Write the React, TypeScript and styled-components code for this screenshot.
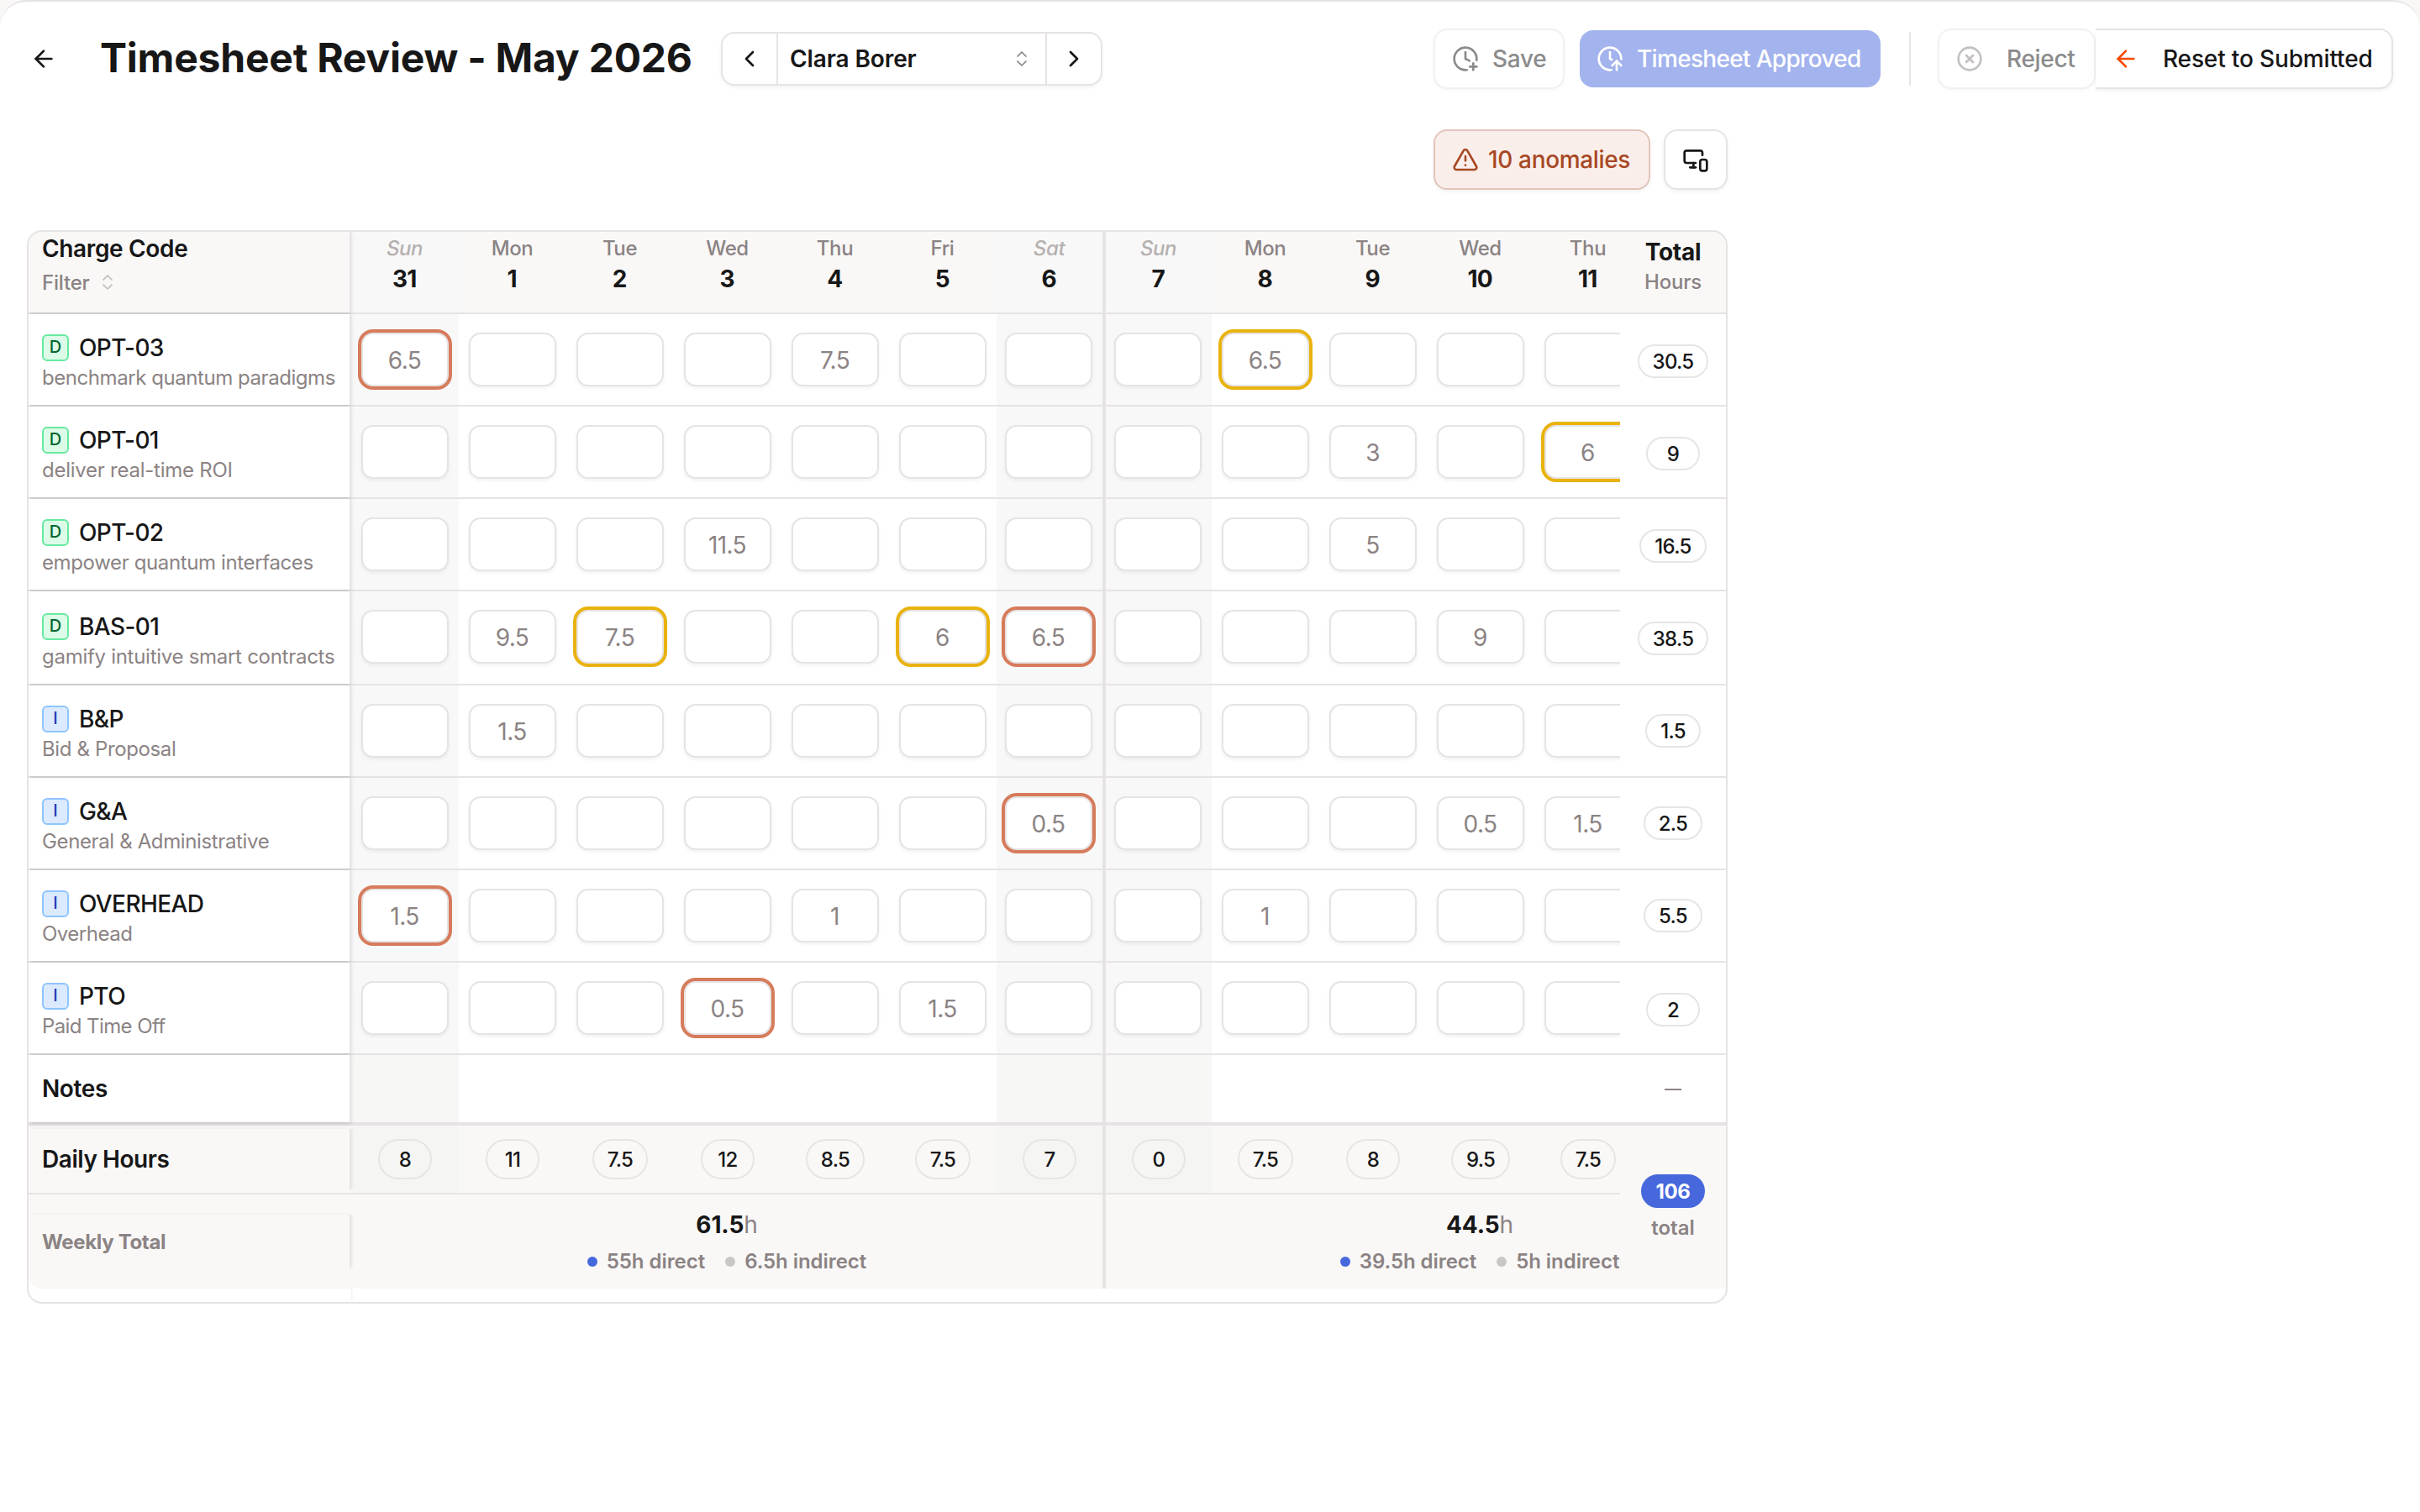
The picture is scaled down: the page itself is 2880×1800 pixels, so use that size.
import React from "react";
import styled, { createGlobalStyle, css } from "styled-components";
import {
  ArrowLeft,
  ChevronLeft,
  ChevronRight,
  ChevronsUpDown,
  CircleX,
  ClockArrowUp,
  ClockPlus,
  MonitorSmartphone,
  TriangleAlert,
} from "lucide-react";

const color = {
  ink: "#171717",
  muted: "#8b8384",
  faint: "#b5b0b0",
  line: "#e7e3e4",
  stone: "#f9f8f7",
  blue: "#4668dc",
};

const GlobalStyle = createGlobalStyle`
  *, *::before, *::after { box-sizing: border-box; }
  body {
    margin: 0;
    background: ${color.stone};
    color: ${color.ink};
    font-family: Inter, "Liberation Sans", sans-serif;
    font-size: 28px;
  }
  button { font: inherit; color: inherit; margin: 0; }
`;

const Page = styled.main`
  height: 1800px;
  padding: 0 32px;
  overflow: hidden;
  background: #fff;
  border-top: 2px solid ${color.line};
  border-radius: 32px 32px 0 0;
`;

const Header = styled.header`
  display: flex;
  align-items: center;
  height: 136px;
`;

const BackButton = styled.button`
  display: flex;
  padding: 0;
  border: 0;
  background: none;
  margin: 0 51px 0 4px;
`;

const Title = styled.h1`
  margin: 0 34px 3px 0;
  width: 705px;
  font-size: 48px;
  font-weight: 700;
  line-height: 60px;
  letter-spacing: -0.22px;
  white-space: nowrap;
`;

const Switcher = styled.div`
  display: flex;
  width: 454px;
  height: 64px;
  border: 2px solid ${color.line};
  border-radius: 16px;
  box-shadow: 0 2px 4px rgba(0, 0, 0, 0.05);
`;

const StepButton = styled.button`
  display: flex;
  align-items: center;
  justify-content: center;
  width: 64px;
  padding: 0;
  border: 0;
  background: none;
`;

const PersonSelect = styled.button`
  display: flex;
  align-items: center;
  justify-content: space-between;
  flex: 1;
  padding: 0 15px 0 14px;
  border: solid ${color.line};
  border-width: 0 2px;
  background: none;
  font-weight: 600;
  letter-spacing: -0.1px;

  svg { color: #858585; margin-right: 1px; }
`;

const Actions = styled.div`
  display: flex;
  align-items: center;
  margin-left: auto;
`;

const ActionButton = styled.button<{ $w: number; $gap?: number; $dim?: boolean; $joined?: boolean; $track?: number }>`
  display: flex;
  align-items: center;
  gap: ${(p) => p.$gap ?? 16}px;
  width: ${(p) => p.$w}px;
  height: 72px;
  padding: 0 0 0 20px;
  border: 2px solid ${(p) => (p.$dim ? "#f2f0f0" : color.line)};
  border-radius: 16px;
  background: #fff;
  color: ${(p) => (p.$dim ? "#8b8b8b" : color.ink)};
  font-weight: 550;
  letter-spacing: ${(p) => p.$track ?? -0.35}px;
  white-space: nowrap;
  box-shadow: 0 2px 4px rgba(0, 0, 0, ${(p) => (p.$dim ? 0.03 : 0.06)});
  ${(p) =>
    p.$joined &&
    css`
      border-left: 0;
      border-radius: 0 16px 16px 0;
    `}
`;

const ApprovedButton = styled(ActionButton)`
  height: 68px;
  margin-left: 18px;
  border: 0;
  background: #a3b3ed;
  color: #fff;
  box-shadow: none;
`;

const Separator = styled.div`
  width: 2px;
  height: 64px;
  margin: 0 32px 0 34px;
  background: #e5e4e4;
`;

const Toolbar = styled.div`
  display: flex;
  justify-content: flex-end;
  gap: 16px;
  width: 2024px;
  height: 136px;
  padding-top: 16px;
`;

const AnomalyButton = styled(ActionButton)`
  border-color: #e3c5ba;
  background: #faeeeb;
  color: #a74823;
`;

const DeviceButton = styled(ActionButton)`
  justify-content: center;
  padding: 0;
`;

const Sheet = styled.section`
  width: 2024px;
  border: 2px solid ${color.line};
  border-radius: 18px;
  overflow: hidden;
`;

const Row = styled.div<{ $h: number; $line?: number; $stone?: boolean }>`
  display: grid;
  grid-template-columns: 384px 1510px 126px;
  height: ${(p) => p.$h}px;
  border-bottom: ${(p) => p.$line ?? 2}px solid ${color.line};
  background: ${(p) => (p.$stone ? color.stone : "#fff")};
`;

const LeadCell = styled.div<{ $top?: number }>`
  position: relative;
  z-index: 1;
  padding: ${(p) => p.$top ?? 0}px 0 0 16px;
  border-right: 2px solid ${color.line};
  background: inherit;
  box-shadow: 0 2px 6px rgba(0, 0, 0, 0.09), 0 2px 4px -2px rgba(0, 0, 0, 0.12);
`;

const Strip = styled.div`
  display: flex;
  overflow: hidden;
`;

const weekendTint = { head: "#f8f8f8", body: "#f8f8f8", notes: "#f7f7f5", foot: "#f5f6f4" };

const DayCell = styled.div<{ $kind: "day" | "sat" | "newWeek" | "sun"; $area: keyof typeof weekendTint }>`
  flex: none;
  width: ${(p) => (p.$kind === "sat" ? 126 : p.$kind === "newWeek" ? 130 : 128)}px;
  border-left: ${(p) => (p.$kind === "newWeek" ? 4 : 0)}px solid ${color.line};
  background: ${(p) => (p.$kind === "day" ? "transparent" : weekendTint[p.$area])};
`;

const DayHead = styled(DayCell)`
  padding-top: 4px;
  text-align: center;
`;

const DayName = styled.div<{ $off: boolean }>`
  font-size: 24px;
  font-weight: 500;
  line-height: 32px;
  letter-spacing: -0.4px;
  text-indent: -1px;
  color: ${(p) => (p.$off ? color.faint : color.muted)};
  font-style: ${(p) => (p.$off ? "italic" : "normal")};
`;

const DayNumber = styled.div`
  font-weight: 650;
  line-height: 40px;
  letter-spacing: -0.7px;
  text-indent: -1.5px;
`;

const HeadTitle = styled.div`
  font-weight: 600;
  line-height: 31px;
  letter-spacing: -0.35px;
`;

const FilterLabel = styled.div`
  display: flex;
  align-items: center;
  gap: 9px;
  height: 48px;
  font-size: 24px;
  font-weight: 500;
  letter-spacing: -0.2px;
  color: ${color.muted};

  svg { color: #bfbbbb; }
`;

const TotalHead = styled.div`
  padding-top: 4px;
  text-align: center;
`;

const TotalTitle = styled.div`
  font-weight: 700;
  line-height: 40px;
  letter-spacing: -0.3px;
`;

const TotalUnit = styled.div`
  font-size: 24px;
  line-height: 31px;
  letter-spacing: -0.2px;
  font-weight: 500;
  color: ${color.muted};
`;

const CodeLine = styled.div`
  display: flex;
  align-items: center;
  gap: 12px;
  height: 40px;
  font-weight: 550;
  letter-spacing: -0.6px;
`;

const Badge = styled.span<{ $direct: boolean }>`
  width: 32px;
  height: 32px;
  border: 2px solid ${(p) => (p.$direct ? "#67e9a2" : "#8ec5ff")};
  border-radius: 6px;
  background: ${(p) => (p.$direct ? "#dcfce7" : "#dbeafe")};
  color: ${(p) => (p.$direct ? "#016630" : "#193cb8")};
  font-size: 20px;
  font-weight: 500;
  line-height: 26px;
  letter-spacing: 0;
  text-align: center;
`;

const CodeNote = styled.div<{ $track: number }>`
  font-size: 24px;
  line-height: 31px;
  letter-spacing: ${(p) => p.$track}px;
  white-space: nowrap;
  color: ${color.muted};
`;

const EntryCell = styled(DayCell)`
  display: flex;
  justify-content: flex-end;
  padding: 22px 12px 0 0;
`;

const Entry = styled.div<{ $flag?: "red" | "amber" }>`
  display: flex;
  align-items: center;
  justify-content: center;
  width: 104px;
  height: 64px;
  padding: 1px 1px 0 0;
  border: 2px solid ${color.line};
  border-radius: 14px;
  background: #fff;
  color: ${color.muted};
  letter-spacing: -0.6px;
  box-shadow: ${(p) =>
    p.$flag ? `0 0 0 4px ${p.$flag === "red" ? "#d67b5b" : "#e9b30e"}` : "0 2px 4px rgba(0, 0, 0, 0.06)"};
`;

const TotalCell = styled.div<{ $top: number }>`
  display: flex;
  justify-content: center;
  padding-top: ${(p) => p.$top}px;
`;

const Pill = styled.span<{ $tall?: boolean; $solid?: boolean }>`
  display: flex;
  align-items: center;
  justify-content: center;
  min-width: 64px;
  height: ${(p) => (p.$tall ? 48 : 40)}px;
  padding: 0 16px;
  border: 2px solid ${(p) => (p.$solid ? color.blue : "#e7e5e4")};
  border-radius: 24px;
  background: ${(p) => (p.$solid ? color.blue : "transparent")};
  color: ${(p) => (p.$solid ? "#fff" : color.ink)};
  font-size: 24px;
  font-weight: ${(p) => (p.$solid ? 650 : 550)};
  letter-spacing: ${(p) => (p.$solid ? -0.4 : -0.7)}px;
`;

const RowLabel = styled.div`
  display: flex;
  align-items: center;
  height: 100%;
  font-weight: 600;
  letter-spacing: -0.4px;
`;

const Dash = styled.div`
  align-self: center;
  justify-self: center;
  width: 20px;
  height: 2px;
  margin-top: 2px;
  background: ${color.muted};
`;

const Footer = styled.div`
  display: grid;
  grid-template-columns: 1894px 126px;
  height: 194px;
  background: ${color.stone};
  border-bottom-left-radius: 16px;
`;

const FooterRow = styled.div<{ $h: number; $line?: boolean }>`
  display: grid;
  grid-template-columns: 384px 1510px;
  align-items: center;
  height: ${(p) => p.$h}px;
  border-bottom: ${(p) => (p.$line ? 2 : 0)}px solid #e7e5e4;
`;

const FooterLead = styled.div<{ $h: number; $muted?: boolean }>`
  position: relative;
  display: flex;
  align-items: center;
  height: ${(p) => p.$h}px;
  padding-left: 16px;
  border-right: 2px solid #e7e5e4;
  font-size: ${(p) => (p.$muted ? 24 : 28)}px;
  font-weight: ${(p) => (p.$muted ? 650 : 600)};
  letter-spacing: ${(p) => (p.$muted ? -0.35 : -0.45)}px;
  color: ${(p) => (p.$muted ? color.muted : color.ink)};
  box-shadow: 2px -1px 3px -1px rgba(0, 0, 0, 0.08);
`;

const FooterStrip = styled(Strip)`
  align-self: stretch;
`;

const DailyCell = styled(DayCell)`
  display: flex;
  align-items: center;
  justify-content: center;
`;

const Week = styled.div<{ $w: number; $divided?: boolean }>`
  flex: none;
  display: flex;
  flex-direction: column;
  align-items: center;
  gap: 12px;
  width: ${(p) => p.$w}px;
  padding-top: 20px;
  border-left: ${(p) => (p.$divided ? 4 : 0)}px solid ${color.line};
`;

const WeekHours = styled.div`
  font-weight: 700;
  line-height: 32px;
  letter-spacing: -0.1px;
`;

const Unit = styled.span`
  font-weight: 400;
  color: ${color.muted};
`;

const Legend = styled.div`
  display: flex;
  gap: 24px;
`;

const LegendItem = styled.span<{ $tone: string }>`
  display: flex;
  align-items: center;
  gap: 11px;
  line-height: 32px;
  font-size: 24px;
  font-weight: 600;
  letter-spacing: -0.05px;
  color: ${color.muted};

  &::before {
    content: "";
    width: 12px;
    height: 12px;
    border-radius: 50%;
    background: ${(p) => p.$tone};
  }
`;

const GrandTotal = styled.div`
  display: flex;
  flex-direction: column;
  align-items: center;
  gap: 8px;
  padding-top: 58px;
`;

const GrandLabel = styled.span`
  font-size: 24px;
  font-weight: 600;
  line-height: 32px;
  color: ${color.muted};
`;

const SheetEnd = styled.div`
  width: 384px;
  height: 16px;
  box-shadow: 2px 0 3px -1px rgba(0, 0, 0, 0.07);
`;

const days: [string, string, "day" | "sat" | "newWeek" | "sun"][] = [
  ["Sun", "31", "sun"],
  ["Mon", "1", "day"],
  ["Tue", "2", "day"],
  ["Wed", "3", "day"],
  ["Thu", "4", "day"],
  ["Fri", "5", "day"],
  ["Sat", "6", "sat"],
  ["Sun", "7", "newWeek"],
  ["Mon", "8", "day"],
  ["Tue", "9", "day"],
  ["Wed", "10", "day"],
  ["Thu", "11", "day"],
];

type Mark = [hours: string, flag?: "red" | "amber"];
interface Charge {
  code: string;
  note: string;
  direct: boolean;
  total: string;
  entries: Record<number, Mark>;
  tall?: boolean;
  track?: number;
  totalTop?: number;
}

const charges: Charge[] = [
  { code: "OPT-03", note: "benchmark quantum paradigms", direct: true, total: "30.5", track: -0.44, entries: { 0: ["6.5", "red"], 4: ["7.5"], 8: ["6.5", "amber"] } },
  { code: "OPT-01", note: "deliver real-time ROI", direct: true, total: "9", track: -0.25, entries: { 9: ["3"], 11: ["6", "amber"] } },
  { code: "OPT-02", note: "empower quantum interfaces", direct: true, total: "16.5", entries: { 3: ["11.5"], 9: ["5"] } },
  { code: "BAS-01", note: "gamify intuitive smart contracts", direct: true, total: "38.5", tall: true, track: -0.28, entries: { 1: ["9.5"], 2: ["7.5", "amber"], 5: ["6", "amber"], 6: ["6.5", "red"], 10: ["9"] } },
  { code: "B&P", note: "Bid & Proposal", direct: false, total: "1.5", totalTop: 34, entries: { 1: ["1.5"] } },
  { code: "G&A", note: "General & Administrative", direct: false, total: "2.5", totalTop: 34, entries: { 6: ["0.5", "red"], 10: ["0.5"], 11: ["1.5"] } },
  { code: "OVERHEAD", note: "Overhead", direct: false, total: "5.5", totalTop: 34, track: -0.5, entries: { 0: ["1.5", "red"], 4: ["1"], 8: ["1"] } },
  { code: "PTO", note: "Paid Time Off", direct: false, total: "2", track: -0.6, entries: { 3: ["0.5", "red"], 5: ["1.5"] } },
];

const daily = ["8", "11", "7.5", "12", "8.5", "7.5", "7", "0", "7.5", "8", "9.5", "7.5"];

export default function App() {
  return (
    <>
      <GlobalStyle />
      <Page>
        <Header>
          <BackButton aria-label="Back">
            <ArrowLeft size={32} />
          </BackButton>
          <Title>Timesheet Review - May 2026</Title>
          <Switcher>
            <StepButton aria-label="Previous">
              <ChevronLeft size={32} />
            </StepButton>
            <PersonSelect>
              Clara Borer
              <ChevronsUpDown size={24} strokeWidth={1.75} />
            </PersonSelect>
            <StepButton aria-label="Next">
              <ChevronRight size={32} />
            </StepButton>
          </Switcher>
          <Actions>
            <ActionButton $w={156} $dim $track={-0.3}>
              <ClockPlus size={32} />
              Save
            </ActionButton>
            <ApprovedButton $w={358} $track={-0.68}>
              <ClockArrowUp size={32} />
              Timesheet Approved
            </ApprovedButton>
            <Separator />
            <ActionButton $w={188} $gap={28} $dim $track={-0.3}>
              <CircleX size={32} color="#c4c0c0" />
              Reject
            </ActionButton>
            <ActionButton $w={354} $gap={28} $joined $track={-0.15}>
              <ArrowLeft size={32} color="#f54a00" />
              Reset to Submitted
            </ActionButton>
          </Actions>
        </Header>

        <Toolbar>
          <AnomalyButton $w={258} $gap={11}>
            <TriangleAlert size={32} />
            10 anomalies
          </AnomalyButton>
          <DeviceButton $w={76} aria-label="Devices">
            <MonitorSmartphone size={32} />
          </DeviceButton>
        </Toolbar>

        <Sheet>
          <Row $h={98} $stone>
            <LeadCell $top={5}>
              <HeadTitle>Charge Code</HeadTitle>
              <FilterLabel>
                Filter
                <ChevronsUpDown size={24} strokeWidth={1.75} />
              </FilterLabel>
            </LeadCell>
            <Strip>
              {days.map(([name, num, kind]) => (
                <DayHead key={num} $kind={kind} $area="head">
                  <DayName $off={kind === "sat" || kind === "sun" || kind === "newWeek"}>{name}</DayName>
                  <DayNumber>{num}</DayNumber>
                </DayHead>
              ))}
            </Strip>
            <TotalHead>
              <TotalTitle>Total</TotalTitle>
              <TotalUnit>Hours</TotalUnit>
            </TotalHead>
          </Row>

          {charges.map((c) => (
            <Row key={c.code} $h={c.tall ? 112 : 110}>
              <LeadCell $top={c.tall ? 22 : 20}>
                <CodeLine>
                  <Badge $direct={c.direct}>{c.direct ? "D" : "I"}</Badge>
                  {c.code}
                </CodeLine>
                <CodeNote $track={c.track ?? -0.37}>{c.note}</CodeNote>
              </LeadCell>
              <Strip>
                {days.map(([, num, kind], i) => (
                  <EntryCell key={num} $kind={kind} $area="body">
                    <Entry $flag={c.entries[i]?.[1]}>{c.entries[i]?.[0]}</Entry>
                  </EntryCell>
                ))}
              </Strip>
              <TotalCell $top={c.totalTop ?? 36}>
                <Pill>{c.total}</Pill>
              </TotalCell>
            </Row>
          ))}

          <Row $h={84} $line={4}>
            <LeadCell>
              <RowLabel>Notes</RowLabel>
            </LeadCell>
            <Strip>
              {days.map(([, num, kind]) => (
                <DayCell key={num} $kind={kind} $area="notes" />
              ))}
            </Strip>
            <Dash />
          </Row>

          <Footer>
            <div>
              <FooterRow $h={82} $line>
                <FooterLead $h={72}>Daily Hours</FooterLead>
                <FooterStrip>
                  {days.map(([, num, kind], i) => (
                    <DailyCell key={num} $kind={kind} $area="foot">
                      <Pill $tall>{daily[i]}</Pill>
                    </DailyCell>
                  ))}
                </FooterStrip>
              </FooterRow>
              <FooterRow $h={112}>
                <FooterLead $h={64} $muted>Weekly Total</FooterLead>
                <FooterStrip>
                  <Week $w={894}>
                    <WeekHours>61.5<Unit>h</Unit></WeekHours>
                    <Legend>
                      <LegendItem $tone={color.blue}>55h direct</LegendItem>
                      <LegendItem $tone="#c9c7c6">6.5h indirect</LegendItem>
                    </Legend>
                  </Week>
                  <Week $w={894} $divided>
                    <WeekHours>44.5<Unit>h</Unit></WeekHours>
                    <Legend>
                      <LegendItem $tone={color.blue}>39.5h direct</LegendItem>
                      <LegendItem $tone="#c9c7c6">5h indirect</LegendItem>
                    </Legend>
                  </Week>
                </FooterStrip>
              </FooterRow>
            </div>
            <GrandTotal>
              <Pill $solid>106</Pill>
              <GrandLabel>total</GrandLabel>
            </GrandTotal>
          </Footer>
          <SheetEnd />
        </Sheet>
      </Page>
    </>
  );
}
